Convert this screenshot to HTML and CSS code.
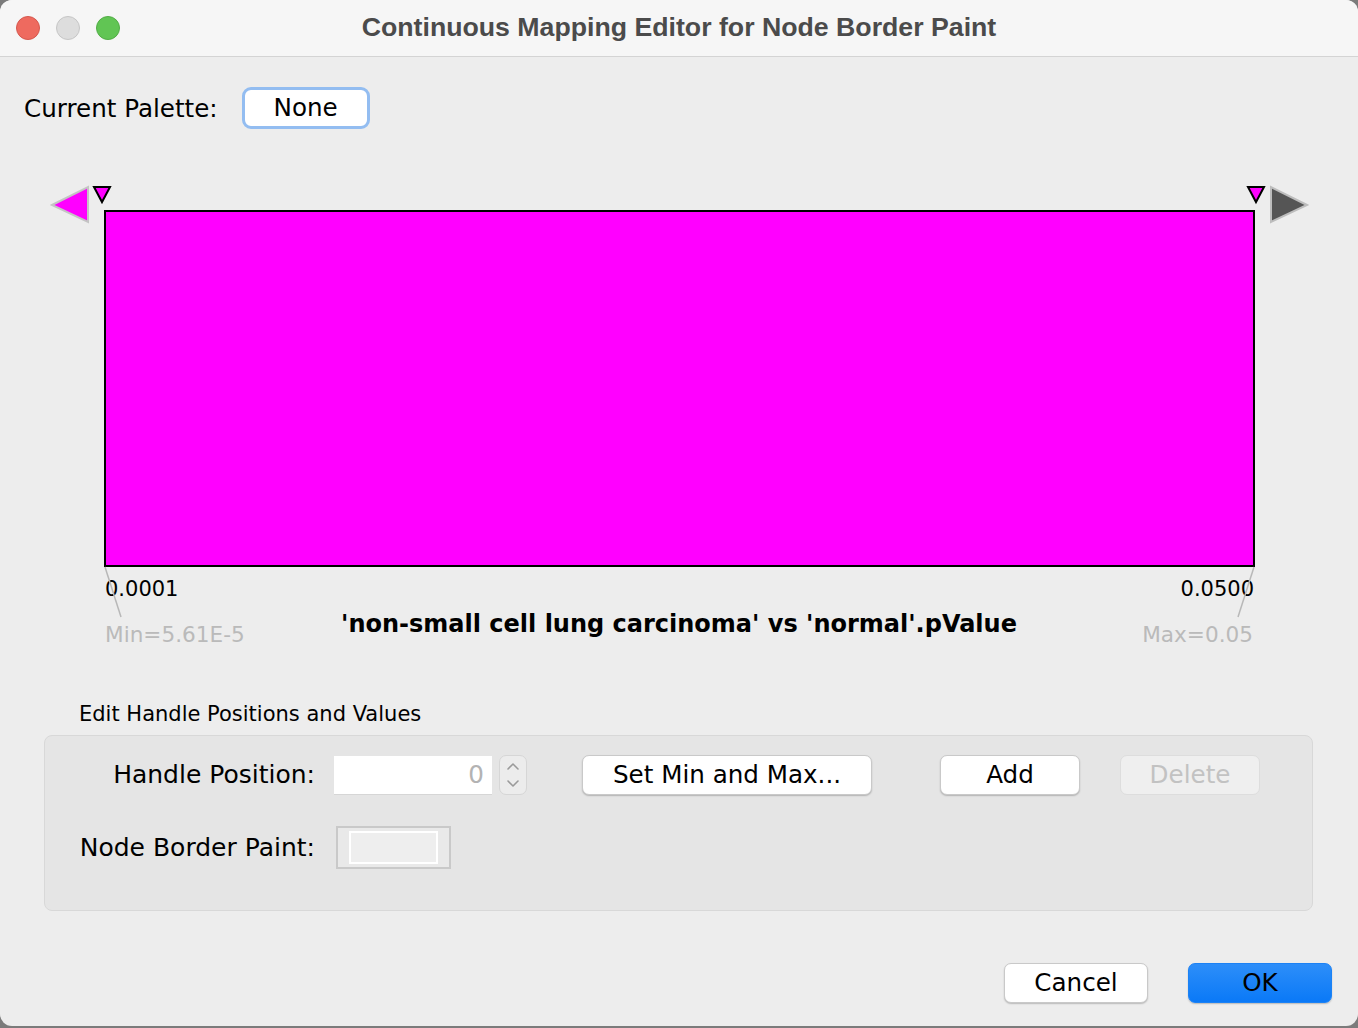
FILE: index.html
```html
<!DOCTYPE html>
<html>
<head>
<meta charset="utf-8">
<link rel="stylesheet" href="styles.css">
</head>
<body>
<div class="window">
  <div class="titlebar">
    <div class="lights">
      <span class="light red"></span>
      <span class="light grey"></span>
      <span class="light green"></span>
    </div>
    <div class="title">Continuous Mapping Editor for Node Border Paint</div>
    <div class="spacer"></div>
  </div>
  <div class="content">
    <div class="palette-row">
      <span class="label">Current Palette:</span>
      <button class="btn palette">None</button>
    </div>

    <div class="editor">
      <svg class="gradient" width="1358" height="390" viewBox="0 0 1358 390">
        <polygon points="52,25 88,7 88,42" fill="#ff00ff" stroke="#c4c4c4" stroke-width="2"/>
        <polygon points="1307,25 1271,7 1271,42" fill="#555555" stroke="#bdbdbd" stroke-width="2"/>
        <polygon points="94,7 110,7 102,22" fill="#ff00ff" stroke="#000" stroke-width="2" stroke-linejoin="miter"/>
        <polygon points="1248,7 1264,7 1256,22" fill="#ff00ff" stroke="#000" stroke-width="2" stroke-linejoin="miter"/>
        <rect x="105" y="31" width="1149" height="355" fill="#ff00ff" stroke="#000" stroke-width="2"/>
      </svg>
      <div class="ticks"><span>0.0001</span><span>0.0500</span></div>
      <div class="axis">
        <span class="range min">Min=5.61E-5</span>
        <span class="attr">'non-small cell lung carcinoma' vs 'normal'.pValue</span>
        <span class="range max">Max=0.05</span>
      </div>
      <svg class="leaders" width="1358" height="460" viewBox="0 0 1358 460">
        <line x1="105" y1="387" x2="121" y2="437" stroke="#b8b8b8" stroke-width="1.5"/>
        <line x1="1254" y1="387" x2="1238" y2="437" stroke="#b8b8b8" stroke-width="1.5"/>
      </svg>
    </div>

    <div class="section-label">Edit Handle Positions and Values</div>
    <div class="panel">
      <div class="row row-handle">
        <span class="field-label">Handle Position:</span>
        <div class="input">0</div>
        <div class="spinner">
          <svg width="28" height="40" viewBox="0 0 28 40">
            <polyline points="9,14 14,9 19,14" fill="none" stroke="#9a9a9a" stroke-width="1.6" stroke-linecap="round" stroke-linejoin="round"/>
            <polyline points="9,26 14,31 19,26" fill="none" stroke="#9a9a9a" stroke-width="1.6" stroke-linecap="round" stroke-linejoin="round"/>
          </svg>
        </div>
        <button class="btn setminmax">Set Min and Max...</button>
        <button class="btn add">Add</button>
        <button class="btn delete" disabled>Delete</button>
      </div>
      <div class="row row-paint">
        <span class="field-label">Node Border Paint:</span>
        <div class="swatch"><div class="swatch-inner"></div></div>
      </div>
    </div>

    <div class="footer">
      <button class="btn cancel">Cancel</button>
      <button class="btn ok">OK</button>
    </div>
  </div>
</div>
</body>
</html>
```

FILE: styles.css
```css
html, body {
  margin: 0;
  padding: 0;
}
body {
  background: #7b7b7b;
  width: 1358px;
  height: 1028px;
  overflow: hidden;
  font-family: "DejaVu Sans", "Liberation Sans", sans-serif;
  color: #000;
}
.window {
  width: 1358px;
  height: 1026px;
  background: #ededed;
  border-radius: 12px;
  overflow: hidden;
  display: flex;
  flex-direction: column;
}
.titlebar {
  height: 56px;
  flex: 0 0 auto;
  background: #f6f6f6;
  border-bottom: 1px solid #d4d4d4;
  display: grid;
  grid-template-columns: 1fr auto 1fr;
  align-items: center;
}
.lights {
  display: flex;
  gap: 16px;
  padding-left: 16px;
}
.light {
  width: 24px;
  height: 24px;
  border-radius: 50%;
  box-sizing: border-box;
}
.light.red { background: #ee6a5f; border: 1px solid #d5584e; }
.light.grey { background: #dddddd; border: 1px solid #c6c6c6; }
.light.green { background: #61c554; border: 1px solid #52ad46; }
.title {
  font-family: "Liberation Sans", Arial, sans-serif;
  font-weight: bold;
  font-size: 26.7px;
  color: #4b4b4b;
  line-height: 30px;
  margin-top: -2px;
}
.content {
  flex: 1 1 auto;
  padding-top: 30px;
}
.palette-row {
  display: flex;
  align-items: center;
  padding-left: 24px;
  height: 42px;
}
.label {
  font-size: 24.6px;
}
.btn {
  font-family: "DejaVu Sans", "Liberation Sans", sans-serif;
  font-size: 24.6px;
  color: #000;
  background: #ffffff;
  border: 1px solid #c9c9c9;
  border-radius: 7px;
  box-shadow: 0 1px 1.5px rgba(0,0,0,0.22);
  box-sizing: border-box;
  padding: 0;
  height: 40px;
  line-height: 36px;
}
.btn.palette {
  margin-left: 24px;
  width: 128px;
  height: 42px;
  border: 3px solid #93bdf1;
  border-radius: 9px;
  box-shadow: none;
}
.editor {
  position: relative;
  margin-top: 51px;
}
.gradient {
  display: block;
}
.leaders {
  position: absolute;
  left: 0;
  top: 0;
  pointer-events: none;
}
.ticks {
  display: flex;
  justify-content: space-between;
  padding: 0 104px 0 105px;
  margin-top: 7px;
  font-size: 21px;
  line-height: 24px;
}
.axis {
  display: grid;
  grid-template-columns: 1fr auto 1fr;
  padding: 0 105px;
  margin-top: 7px;
  align-items: start;
}
.range {
  font-size: 21.6px;
  line-height: 24px;
  color: #bababa;
  margin-top: 15px;
}
.range.max {
  justify-self: end;
}
.attr {
  font-weight: bold;
  font-size: 24px;
  line-height: 28px;
  margin-top: 2px;
}
.section-label {
  margin-top: 55px;
  padding-left: 79px;
  font-size: 21px;
  line-height: 24px;
}
.panel {
  margin: 9px 45px 0 44px;
  background: #e5e5e5;
  border: 1px solid #d8d8d8;
  border-radius: 8px;
  padding: 18px 0 41px 0;
}
.row {
  display: flex;
  align-items: center;
}
.row-handle {
  height: 41px;
}
.row-paint {
  height: 43px;
  margin-top: 31px;
}
.field-label {
  width: 270px;
  text-align: right;
  font-size: 25px;
  flex: 0 0 auto;
}
.input {
  margin-left: 19px;
  width: 158px;
  height: 39px;
  box-sizing: border-box;
  background: #fff;
  border-bottom: 1px solid #d6d6d6;
  color: #b3b3b3;
  font-size: 24.6px;
  line-height: 38px;
  text-align: right;
  padding-right: 8px;
  margin-top: 2px;
}
.spinner {
  margin-left: 7px;
  width: 28px;
  height: 40px;
  box-sizing: border-box;
  border: 1px solid #d6d6d6;
  border-radius: 7px;
  background: #ececec;
  overflow: hidden;
}
.spinner svg {
  display: block;
  margin: -1px;
}
.btn.setminmax {
  margin-left: 55px;
  width: 290px;
}
.btn.add {
  margin-left: 68px;
  width: 140px;
}
.btn.delete {
  margin-left: 40px;
  width: 140px;
  background: #efefef;
  color: #c2c2c2;
  border-color: #dddddd;
  box-shadow: none;
}
.swatch {
  margin-left: 21px;
  width: 115px;
  height: 43px;
  box-sizing: border-box;
  border: 2px solid #c9c9c9;
  background: #e9e9e9;
  padding: 3px 11px;
}
.swatch-inner {
  width: 89px;
  height: 33px;
  box-sizing: border-box;
  border: 2px solid #ffffff;
  background: #eeeeee;
}
.footer {
  display: flex;
  justify-content: flex-end;
  gap: 40px;
  padding-right: 26px;
  margin-top: 52px;
}
.btn.cancel,
.btn.ok {
  width: 144px;
}
.btn.ok {
  background: linear-gradient(#2d8ef9, #0a79f7);
  border: 1px solid #1c82f5;
}
```
